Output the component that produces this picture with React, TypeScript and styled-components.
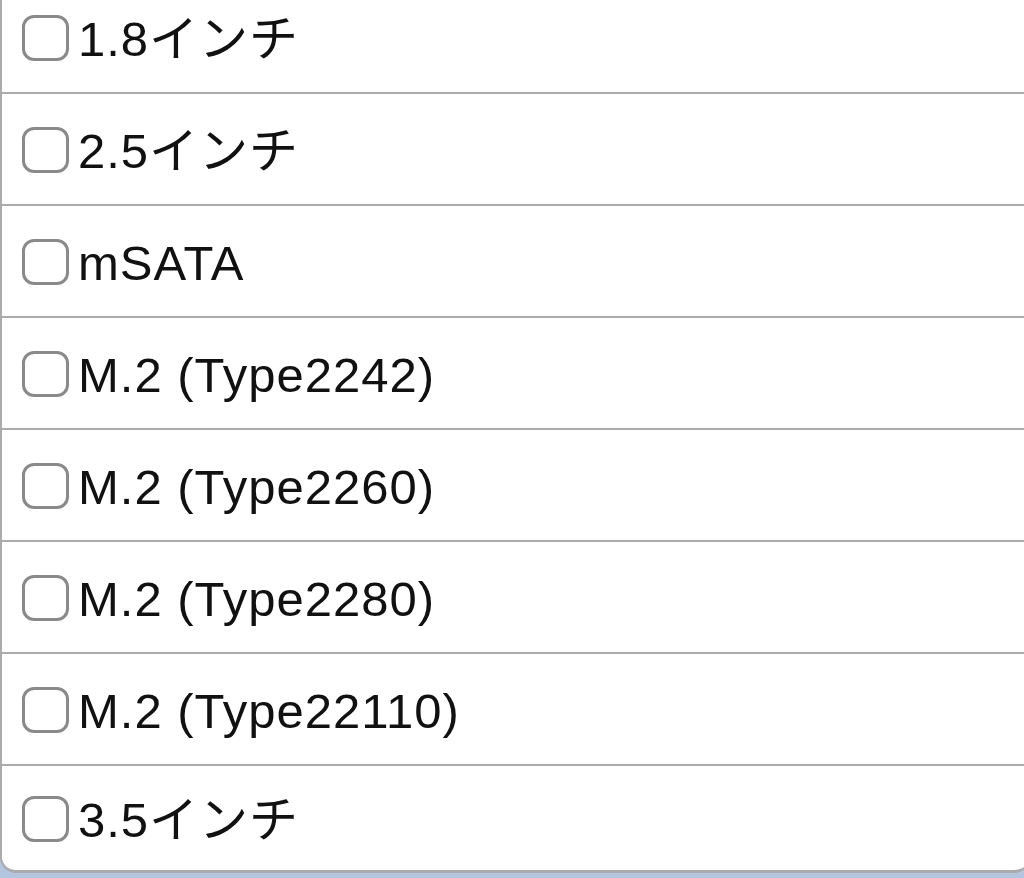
import styled, { createGlobalStyle } from "styled-components"

const GlobalStyle = createGlobalStyle`
  html, body {
    margin: 0;
    padding: 0;
    background: #b3c5df;
    overflow: hidden;
  }
  body {
    font-family: "Liberation Sans", "Noto Sans CJK JP", sans-serif;
  }
`

const Page = styled.div`
  width: 1024px;
  height: 878px;
  overflow: hidden;
`

const List = styled.ul`
  list-style: none;
  margin: -18px 0 0 0;
  padding: 0;
  width: 1030px;
  background: #ffffff;
  border-left: 2px solid #ababab;
  border-bottom: 3px solid #ababab;
  border-radius: 0 0 16px 16px;
  box-sizing: border-box;
`

const Item = styled.li<{ last?: boolean }>`
  height: ${props => props.last ? "102px" : "108px"};
  border-bottom: ${props => props.last ? "none" : "2px solid #ababab"};
  display: flex;
  align-items: center;
  padding-left: 20px;
  padding-top: 2px;
  box-sizing: content-box;
`

const Label = styled.label`
  display: flex;
  align-items: center;
  gap: 9px;
  font-size: 49px;
  line-height: 1;
  letter-spacing: 1px;
  color: #111111;
  cursor: pointer;
`

const Text = styled.span`
  margin-top: 2px;
`

const Box = styled.input`
  appearance: none;
  -webkit-appearance: none;
  margin: 0;
  width: 47px;
  height: 46px;
  border: 3px solid #8a8a8a;
  border-radius: 12px;
  background: #ffffff;
  box-sizing: border-box;
  flex-shrink: 0;
`

const items = [
  "1.8インチ",
  "2.5インチ",
  "mSATA",
  "M.2 (Type2242)",
  "M.2 (Type2260)",
  "M.2 (Type2280)",
  "M.2 (Type22110)",
  "3.5インチ",
]

export default function App() {
  return (
    <Page>
      <GlobalStyle />
      <List>
        {items.map((name, i) => (
          <Item key={name} last={i === items.length - 1}>
            <Label>
              <Box type="checkbox" />
              <Text>{name}</Text>
            </Label>
          </Item>
        ))}
      </List>
    </Page>
  )
}
